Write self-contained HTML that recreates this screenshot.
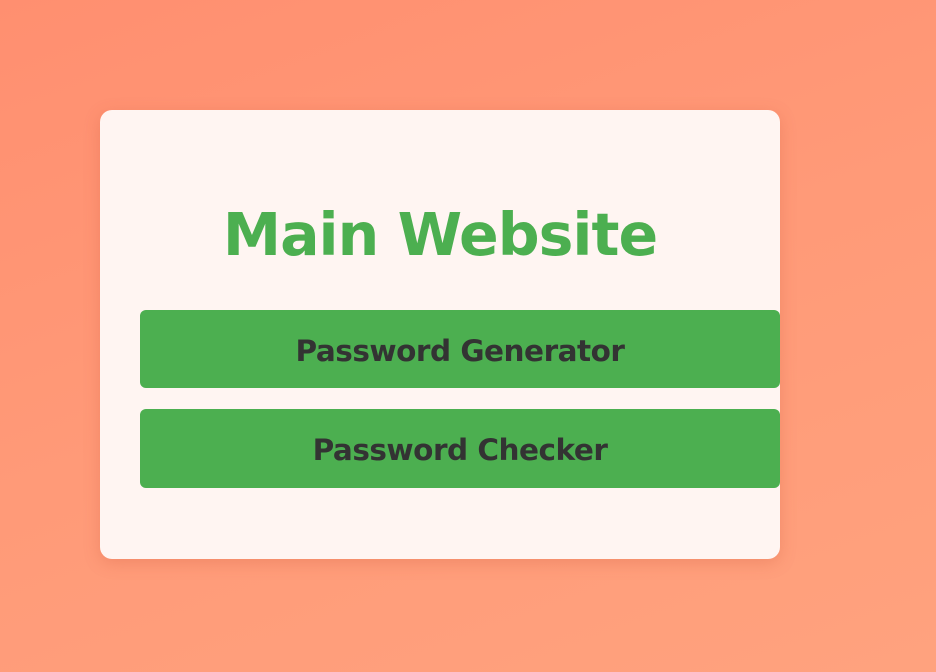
<!DOCTYPE html>
<html><head><style>
html,body{margin:0;padding:0;}
body{width:936px;height:672px;overflow:hidden;background:linear-gradient(160deg,#ff8f70 0%,#ff9a78 50%,#ffa27e 100%);font-family:"DejaVu Sans","Liberation Sans",sans-serif;position:relative;}
.card{position:absolute;left:100px;top:110px;width:680px;height:449px;background:#fff5f2;border-radius:12px;box-shadow:0 4px 16px rgba(200,80,50,0.25);}
h1{position:absolute;width:680px;top:196px;margin:0;text-align:center;color:#4caf50;font-weight:bold;font-size:58.5px;line-height:78px;letter-spacing:-1px;}
.btn{position:absolute;left:140px;width:640px;height:78px;background:#4caf50;border-radius:6px;color:#333;font-weight:bold;font-size:29.5px;line-height:82px;text-align:center;letter-spacing:-0.5px;}
</style></head><body>
<div class="card"></div>
<h1 style="left:100px">Main Website</h1>
<div class="btn" style="top:310px">Password Generator</div>
<div class="btn" style="top:409px;height:79px">Password Checker</div>
</body></html>
